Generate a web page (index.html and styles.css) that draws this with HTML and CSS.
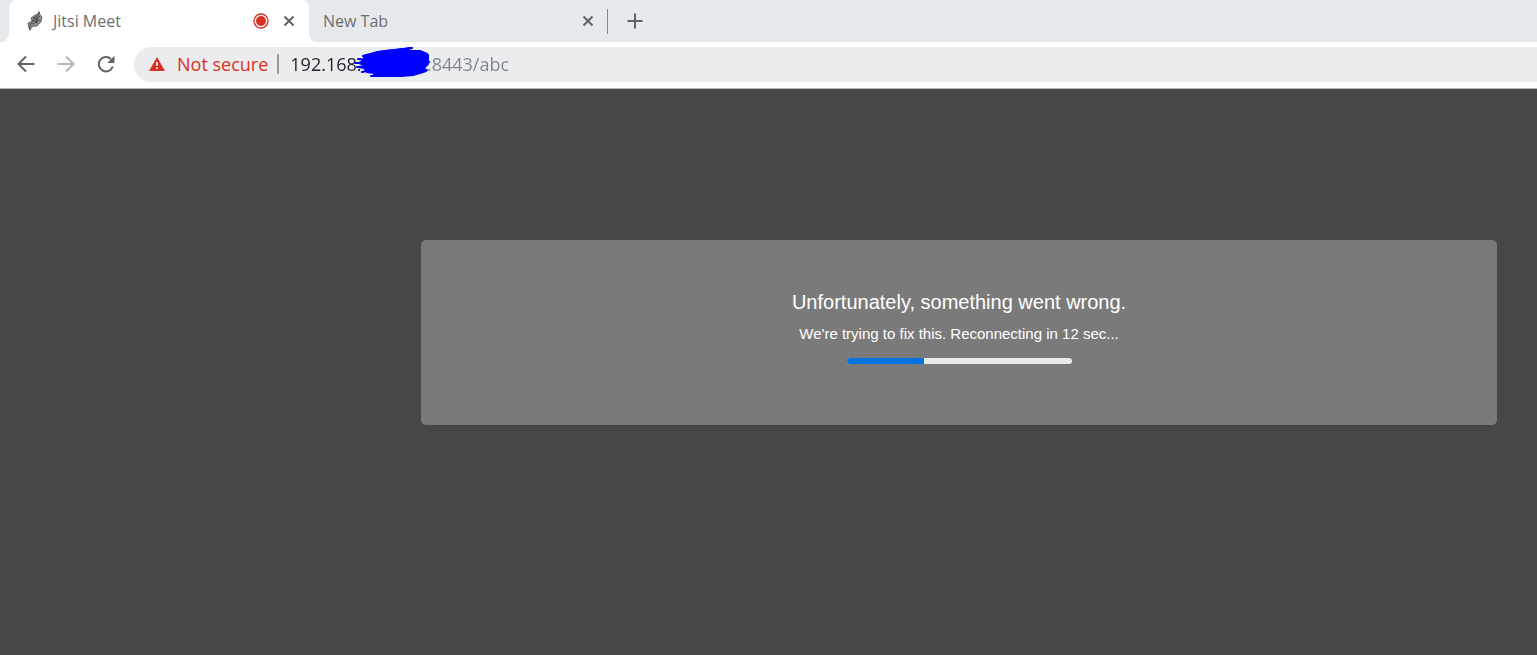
FILE: index.html
```html
<!DOCTYPE html>
<html lang="en">
<head>
<meta charset="utf-8">
<title>Jitsi Meet</title>
<link rel="stylesheet" href="styles.css">
</head>
<body>
<header class="browser">
  <div class="tabs">
    <div class="tab tab-active">
      <svg class="favicon" width="16" height="20" viewBox="0 0 16 20" aria-hidden="true">
        <path d="M12 .5L13 4L15 6L14 11L10 15L5 15.500L3 19.500L1.500 15L1 12L5 10L4 7L8 4L11 3Z" fill="#909090" stroke="#555" stroke-width=".8"/>
        <path d="M12 1L11 5L6 7L11 7L5 10L11 10L6 13L4 12L2 18M13 5L9 9L13 9M11 12L8 11" fill="none" stroke="#3c3c3c" stroke-width=".8"/>
      </svg>
      <span class="tab-title">Jitsi Meet</span>
      <svg class="recording" width="16" height="16" viewBox="0 0 16 16" role="img" aria-label="Recording">
        <circle cx="8" cy="8" r="7" fill="#fff" stroke="#d93025" stroke-width="1.300"/>
        <circle cx="8" cy="8" r="5" fill="#d93025"/>
      </svg>
      <button class="close" aria-label="Close Jitsi Meet">
        <svg width="12" height="12" viewBox="0 0 12 12"><path d="M1.500 1.500L10.500 10.500M10.500 1.500L1.500 10.500"/></svg>
      </button>
    </div>
    <div class="tab tab-idle">
      <span class="tab-title">New Tab</span>
      <button class="close" aria-label="Close New Tab">
        <svg width="12" height="12" viewBox="0 0 12 12"><path d="M1.500 1.500L10.500 10.500M10.500 1.500L1.500 10.500"/></svg>
      </button>
    </div>
    <button class="new-tab" aria-label="Open new tab">
      <svg width="16" height="16" viewBox="0 0 16 16"><path d="M8 .5V15.500M.5 8H15.500"/></svg>
    </button>
  </div>
  <div class="toolbar">
    <button class="nav" aria-label="Back">
      <svg width="18" height="18" viewBox="0 0 18 18"><path d="M17.500 9H2M9 1.500L1.500 9L9 16.500"/></svg>
    </button>
    <button class="nav" aria-label="Forward" disabled>
      <svg width="18" height="18" viewBox="0 0 18 18"><path d="M.5 9H16M9 1.500L16.500 9L9 16.500"/></svg>
    </button>
    <button class="nav" aria-label="Reload">
      <svg width="18" height="18" viewBox="0 0 18 18"><path d="M15.800 11.500A7.200 7.200 0 1 1 14 4"/><path class="solid" d="M17.500 .8V8H10.300Z"/></svg>
    </button>
    <div class="address">
      <button class="security">
        <svg width="16" height="14" viewBox="0 0 16 14" aria-hidden="true"><path d="M8 0L16 14H0Z" fill="#d93025"/><path d="M7.200 5h1.600v4H7.200zM7.200 10.300h1.600v1.600H7.200z" fill="#fff"/></svg>
        <span>Not secure</span>
      </button>
      <div class="url">
        <input class="url-input" type="text" aria-label="Address" value="192.168.&nbsp;&nbsp;&nbsp;&nbsp;&nbsp;&nbsp;&nbsp;&nbsp;&nbsp;&nbsp;&nbsp;&nbsp;&nbsp;&nbsp;:8443/abc">
        <svg class="scribble" width="78" height="32" viewBox="0 0 78 32" aria-hidden="true">
          <path d="M10 13L10 9L18 7L24 5L36 3.500L50 2L57 1L52 4L66 4L73 7L72 13L74 17L70 21L72 24L66 26L59 28L47 29L35 29L20 29L20 26L13 25L10 21L5 20L11 18L5 16Z"/>
          <path d="M9 9L24 5L58 1M4 12L15 13M1 16L18 16M3 20L15 20M8 25L24 22M17 29L35 29M60 27L73 23M65 18L75 15M68 8L74 8V14"/>
        </svg>
      </div>
    </div>
  </div>
</header>
<main class="page">
  <section class="notice" aria-live="polite">
    <h1 class="notice-title">Unfortunately, something went wrong.</h1>
    <p class="notice-text">We're trying to fix this. Reconnecting in 12 sec...</p>
    <progress class="progress" max="224" value="77" aria-label="Reconnecting"></progress>
  </section>
</main>
</body>
</html>
```
FILE: styles.css
```css
* { box-sizing: border-box; }
body {
  margin: 0;
  min-height: 100vh;
  display: flex;
  flex-direction: column;
  background: #474747;
  font-family: "Open Sans", "Noto Sans", sans-serif;
}
button { border: 0; padding: 0; background: none; font: inherit; display: flex; align-items: center; justify-content: center; }
svg { display: block; flex: none; }
.browser { background: #fff; border-bottom: 1px solid #b2b4b5; }
/* The upper half is grey behind the tabs' round tops, the lower half white behind their feet. */
.tabs {
  height: 42px;
  display: flex;
  background: linear-gradient(#e6e9ec 0 20px, transparent 20px), linear-gradient(90deg, #fff 0 320px, #e6e9ec 320px);
}
.tabs::before { content: ""; width: 9px; background: #e6e9ec; border-radius: 0 0 8px 0; }
.tab { width: 300px; display: flex; align-items: center; font-size: 16px; color: #6b6e71; }
.tab-active { padding: 0 14px 0 18px; background: #fff; border-radius: 8px 8px 0 0; }
.tab-title { flex: 1; }
.favicon { margin-right: 10px; }
.recording { margin-right: 14px; }
.close svg, .new-tab svg { fill: none; stroke: #5f6368; stroke-width: 2; }
.tab-idle { padding: 0 15px 0 14px; background: #e6e9ec; border-bottom-left-radius: 8px; }
.new-tab { width: 52px; position: relative; background: #e6e9ec; }
.new-tab::before { content: ""; position: absolute; left: -2px; top: 9px; width: 1px; height: 25px; background: #85898d; }
.toolbar { display: flex; align-items: center; padding: 5px 0 6px 8px; }
.nav { width: 36px; height: 35px; margin-right: 4px; padding-bottom: 1px; }
.nav svg { fill: none; stroke: #5f6368; stroke-width: 2; }
.nav:disabled { opacity: .45; }
.nav .solid { fill: #5f6368; stroke: none; }
.address {
  flex: 1;
  height: 35px;
  margin-left: 6px;
  padding: 0 0 2px 15px;
  display: flex;
  align-items: center;
  background: #ebecee;
  border-radius: 18px 0 0 18px;
  font-size: 18px;
}
.security { gap: 12px; color: #d93025; white-space: nowrap; }
.security::after { content: ""; width: 2px; height: 20px; background: #96999c; margin-left: -3px; }
.url { position: relative; flex: 1; margin-left: 11px; }
.url-input {
  width: 100%;
  height: 33px;
  display: block;
  padding: 0;
  border: 0;
  outline: 0;
  font: inherit;
  background: linear-gradient(90deg, #202124 0 100px, #808488 100px);
  background-clip: text;
  -webkit-text-fill-color: transparent;
}
.scribble { position: absolute; left: 64px; top: 0; fill: #00f; stroke: #00f; stroke-width: 2; stroke-linejoin: round; stroke-linecap: round; }
.page { flex: 1; padding-top: 151px; }
.notice {
  width: 70%;
  margin: 0 40px 0 auto;
  padding: 48px 20px 61px;
  display: flex;
  flex-direction: column;
  align-items: center;
  background: #7a7a7a;
  border-radius: 5px;
  color: #fff;
  font-family: "Liberation Sans", Arial, sans-serif;
  text-align: center;
}
.notice-title { margin: 0 0 8px; font-size: 20px; line-height: 28px; font-weight: 400; }
.notice-text { margin: 0 0 14px; font-size: 15px; line-height: 20px; }
.progress { width: 225px; height: 6px; display: block; appearance: none; border: 0; border-radius: 3px; overflow: hidden; background: #e9e9e9; }
.progress::-webkit-progress-bar { background: #e9e9e9; }
.progress::-webkit-progress-value { background: #0074e0; }
```
